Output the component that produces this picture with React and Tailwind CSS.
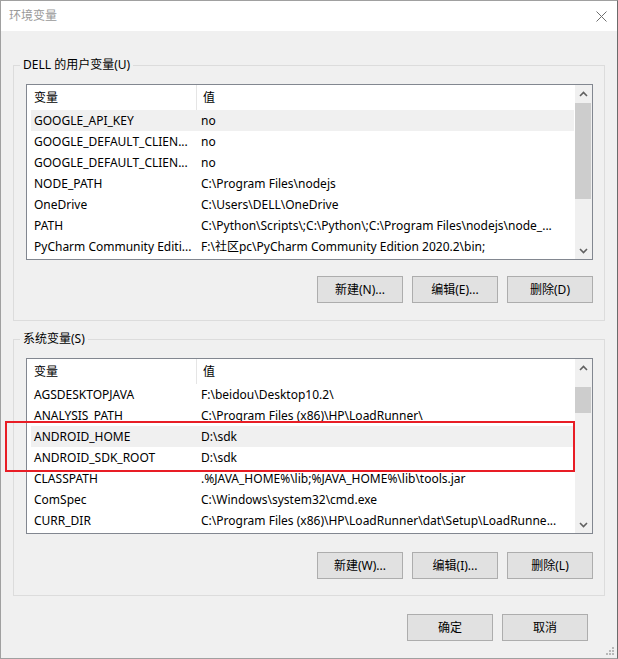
import React from "react";

const userVars = [
  ["GOOGLE_API_KEY", "no", true],
  ["GOOGLE_DEFAULT_CLIEN...", "no"],
  ["GOOGLE_DEFAULT_CLIEN...", "no"],
  ["NODE_PATH", "C:\\Program Files\\nodejs"],
  ["OneDrive", "C:\\Users\\DELL\\OneDrive"],
  ["PATH", "C:\\Python\\Scripts\\;C:\\Python\\;C:\\Program Files\\nodejs\\node_..."],
  ["PyCharm Community Editi...", "F:\\社区pc\\PyCharm Community Edition 2020.2\\bin;"],
];

const sysVars = [
  ["AGSDESKTOPJAVA", "F:\\beidou\\Desktop10.2\\"],
  ["ANALYSIS_PATH", "C:\\Program Files (x86)\\HP\\LoadRunner\\"],
  ["ANDROID_HOME", "D:\\sdk", true],
  ["ANDROID_SDK_ROOT", "D:\\sdk"],
  ["CLASSPATH", ".%JAVA_HOME%\\lib;%JAVA_HOME%\\lib\\tools.jar"],
  ["ComSpec", "C:\\Windows\\system32\\cmd.exe"],
  ["CURR_DIR", "C:\\Program Files (x86)\\HP\\LoadRunner\\dat\\Setup\\LoadRunne..."],
];

function Chevron({ up }) {
  return (
    <svg width="9" height="6" viewBox="0 0 9 6">
      <path
        d={up ? "M1 5 L4.5 1.5 L8 5" : "M1 1 L4.5 4.5 L8 1"}
        fill="none"
        stroke="#606060"
        strokeWidth="1.6"
      />
    </svg>
  );
}

function ListBox({ rows, thumbTop, thumbHeight }) {
  return (
    <div className="h-[176px] border border-[#828790] bg-white flex">
      <div className="flex-1 flex flex-col pr-[1px]">
        <div className="h-[25px] flex items-center bg-white">
          <div className="w-[170px] h-full flex items-center pl-[7px] border-r border-[#e5e5e5]">变量</div>
          <div className="pl-[6px]">值</div>
        </div>
        {rows.map(([n, v, hl], i) => (
          <div
            key={i}
            className={
              "h-[21px] ml-[4px] flex items-center " + (hl ? "bg-[#f0f0f0]" : "bg-white")
            }
          >
            <div className="w-[166px] pl-[3px] whitespace-nowrap overflow-hidden">{n}</div>
            <div className="flex-1 pl-[4px] whitespace-nowrap overflow-hidden">{v}</div>
          </div>
        ))}
      </div>
      <div className="w-[17px] bg-[#f0f0f0] flex flex-col">
        <div className="h-[17px] flex items-center justify-center">
          <Chevron up />
        </div>
        <div className="relative flex-1">
          <div
            className="absolute left-0 w-[16px] bg-[#cdcdcd]"
            style={{ top: thumbTop, height: thumbHeight }}
          />
        </div>
        <div className="h-[17px] flex items-center justify-center">
          <Chevron />
        </div>
      </div>
    </div>
  );
}

function Btn({ children, w = "w-[86px]" }) {
  return (
    <div
      className={
        w +
        " h-[27px] bg-[#e1e1e1] border border-[#adadad] flex items-center justify-center"
      }
    >
      {children}
    </div>
  );
}

function Group({ title, children, pb }) {
  return (
    <div className={"relative border border-[#dcdcdc] pt-[18px] pl-[12px] pr-[11px] " + pb}>
      <div className="absolute left-[6px] top-[-9px] px-[3px] bg-[#f0f0f0] leading-[16px]">
        {title}
      </div>
      {children}
    </div>
  );
}

export default function App() {
  return (
    <div className="w-[618px] h-[659px] border border-[#a0a0a0] border-r-[#6b6b6b] bg-[#f0f0f0] flex flex-col text-[12px] text-black font-['Noto_Sans','Noto_Sans_CJK_SC',sans-serif] relative overflow-hidden">
      <div className="h-[30px] bg-white flex items-center justify-between pl-[8px] pr-[10px] shrink-0">
        <span className="text-[#999999] text-[12px]">环境变量</span>
        <svg width="11" height="11" viewBox="0 0 11 11">
          <path d="M0.5 0.5 L10.5 10.5 M10.5 0.5 L0.5 10.5" stroke="#6e6e6e" strokeWidth="1" />
        </svg>
      </div>
      <div className="flex flex-col pl-[12px] pr-[12px] pt-[34px]">
        <Group title="DELL 的用户变量(U)" pb="pb-[17px]">
          <ListBox rows={userVars} thumbTop={1} thumbHeight={96} />
          <div className="flex justify-end gap-[9px] mt-[16px]">
            <Btn>新建(N)...</Btn>
            <Btn>编辑(E)...</Btn>
            <Btn>删除(D)</Btn>
          </div>
        </Group>
        <div className="h-[18px]" />
        <Group title="系统变量(S)" pb="pb-[16px]">
          <ListBox rows={sysVars} thumbTop={11} thumbHeight={26} />
          <div className="flex justify-end gap-[9px] mt-[18px]">
            <Btn>新建(W)...</Btn>
            <Btn>编辑(I)...</Btn>
            <Btn>删除(L)</Btn>
          </div>
        </Group>
        <div className="flex justify-end gap-[9px] mt-[18px] pr-[17px]">
          <Btn>确定</Btn>
          <Btn>取消</Btn>
        </div>
      </div>
      <div className="absolute left-[4px] top-[420px] w-[570px] h-[51px] border-2 border-[#e81d25]" />
      <svg className="absolute right-[2px] bottom-[2px]" width="10" height="10" viewBox="0 0 10 10">
        <g fill="#b8b8b8">
          <rect x="7" y="1" width="2" height="2" />
          <rect x="4" y="4" width="2" height="2" />
          <rect x="7" y="4" width="2" height="2" />
          <rect x="1" y="7" width="2" height="2" />
          <rect x="4" y="7" width="2" height="2" />
          <rect x="7" y="7" width="2" height="2" />
        </g>
      </svg>
    </div>
  );
}
